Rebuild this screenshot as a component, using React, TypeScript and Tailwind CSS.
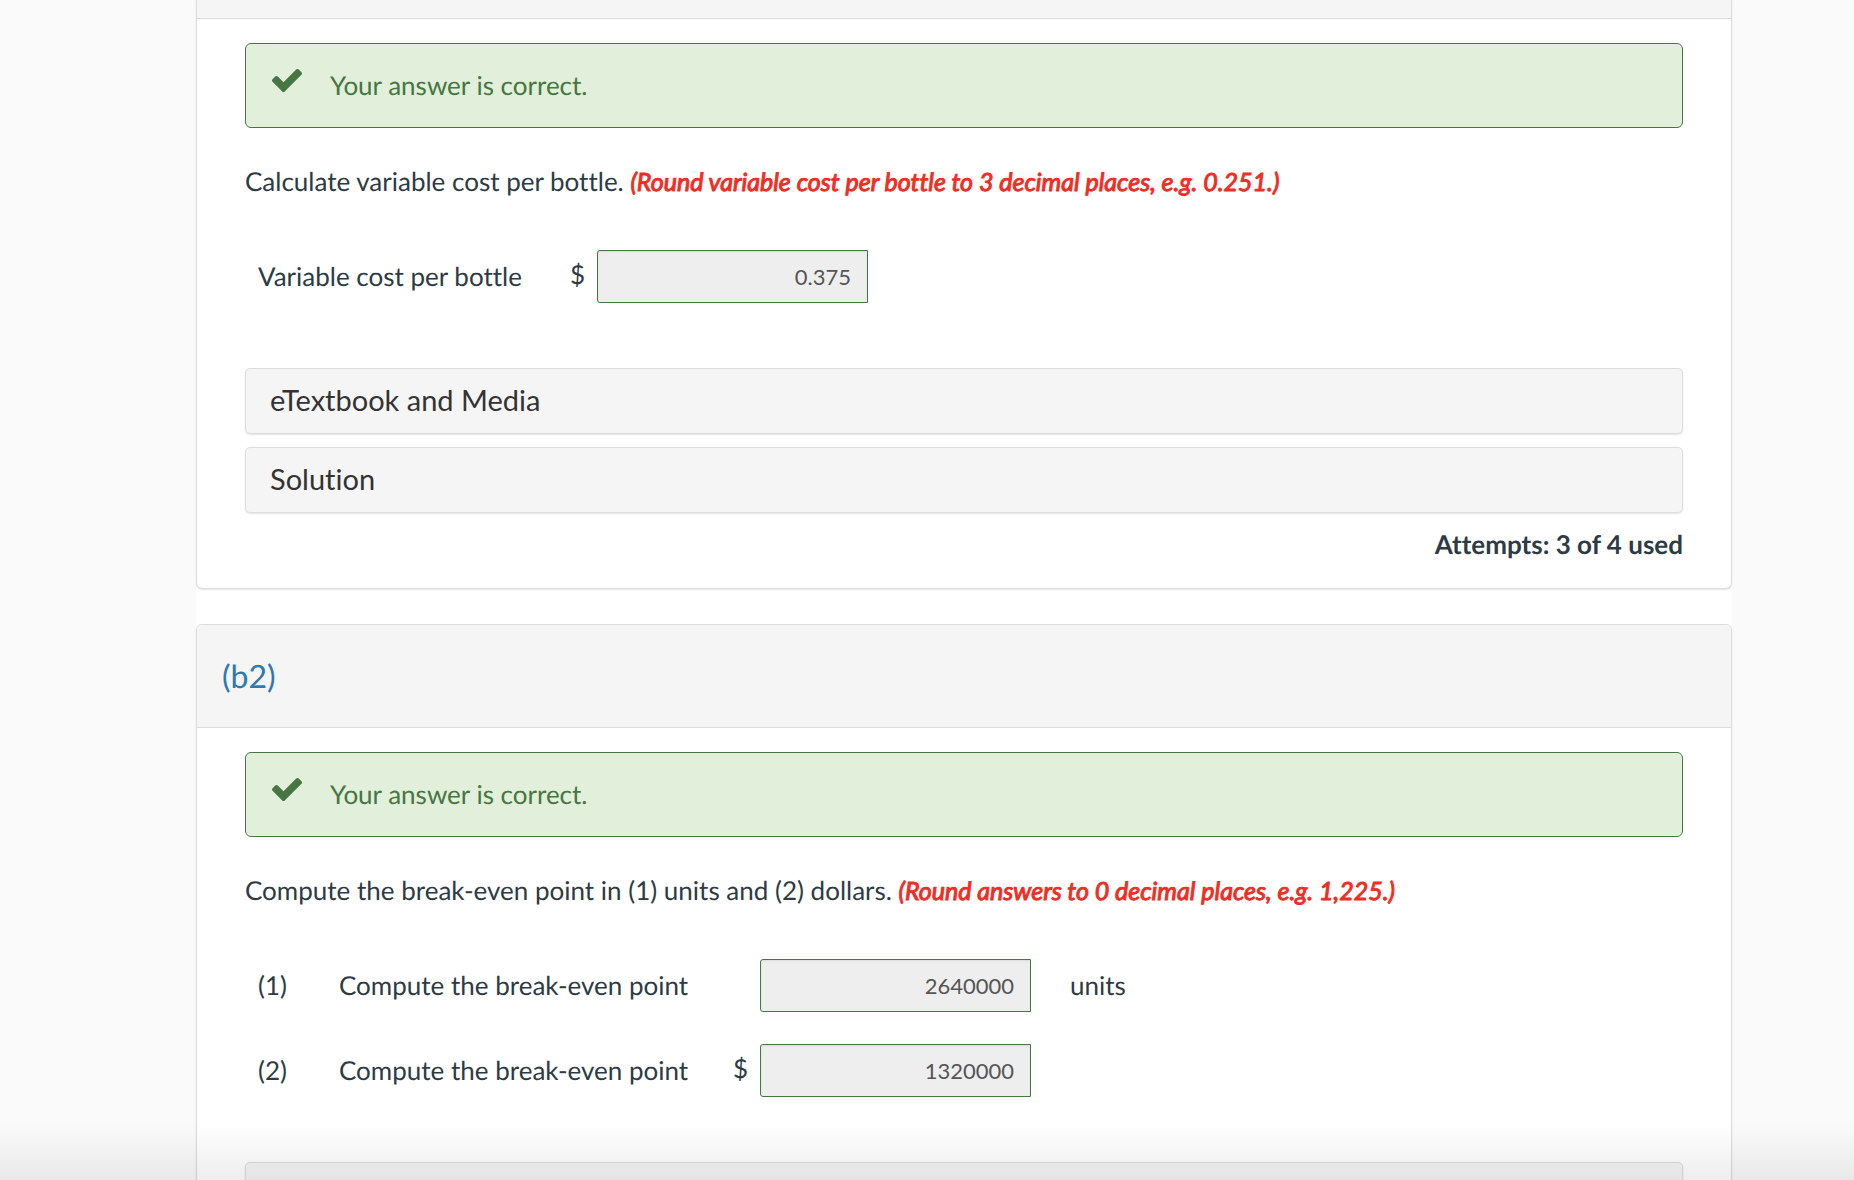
import type { ReactNode } from "react";

function CorrectAlert() {
  return (
    <div
      role="status"
      className="flex h-[85px] items-center rounded-[6px] border border-[#467742] bg-[#e2efda] pl-[26px] text-[#467742]"
    >
      <svg viewBox="0 0 1550 1188" className="mb-[10px] h-[23px] w-[30px] fill-current" aria-hidden="true">
        <path d="M1550 232q0 40-28 68l-724 724-136 136q-28 28-68 28t-68-28l-136-136L28 662Q0 634 0 594t28-68l136-136q28-28 68-28t68 28l294 295L1250 28q28-28 68-28t68 28l136 136q28 28 28 68z" />
      </svg>
      <span className="ml-7 pb-[2px]">Your answer is correct.</span>
    </div>
  );
}

function Panel({ title, children }: { title?: string; children: ReactNode }) {
  if (!title) {
    return (
      <section className="rounded-b-[6px] border border-t-0 border-[#dddddd] bg-white shadow-[0_1px_2px_rgba(0,0,0,0.1)]">
        <div className="h-[19px] border-b border-[#dddddd] bg-[#f5f5f5]" />
        <div className="px-12 pt-6">{children}</div>
      </section>
    );
  }

  return (
    <section className="rounded-[6px] border border-[#dddddd] bg-white shadow-[0_1px_2px_rgba(0,0,0,0.1)]">
      <header className="flex h-[103px] items-center rounded-t-[6px] border-b border-[#dddddd] bg-[#f5f5f5] px-[25px]">
        <h2 className="text-[32px] leading-[36px]">
          <a href="#b2" className="text-[#2d79b0]">
            {title}
          </a>
        </h2>
      </header>
      <div className="px-12 pt-6">{children}</div>
    </section>
  );
}

function Prompt({ text, note }: { text: string; note: string }) {
  return (
    <p className="mt-[35px]">
      {text} <em className="text-[25px] text-[#ee2e24] [-webkit-text-stroke:1px_#ee2e24]">{note}</em>
    </p>
  );
}

function Answer({ id, value, currency }: { id: string; value: string; currency?: boolean }) {
  return (
    <div className="flex items-center justify-end gap-3">
      {currency && <span className="pb-[6px]">$</span>}
      <input
        id={id}
        type="text"
        value={value}
        disabled
        className="h-[53px] w-[271px] rounded-l-[3px] border border-[#467742] bg-[#eeeeee] px-4 text-right text-[22px] text-[#555555] shadow-[inset_0_1px_2px_rgba(0,0,0,0.08)]"
      />
    </div>
  );
}

function Resource({ label, children }: { label?: string; children?: ReactNode }) {
  return (
    <button
      type="button"
      aria-label={label}
      className="block h-[66px] w-full rounded-[5px] border border-[#dddddd] bg-[#f5f5f5] px-6 pb-[2px] text-left text-[29px] text-[#333333] shadow-[0_1px_2px_rgba(0,0,0,0.1)]"
    >
      {children}
    </button>
  );
}

export default function App() {
  return (
    <div className="h-screen overflow-hidden bg-[#fafafa] pr-[122px] pl-[196px] font-['Lato',sans-serif] text-[26px] leading-[36px] text-[#2d3b45] [font-variant-ligatures:none] [text-rendering:geometricPrecision]">
      <main className="min-h-full bg-white">
        <Panel>
          <CorrectAlert />
          <Prompt
            text="Calculate variable cost per bottle."
            note="(Round variable cost per bottle to 3 decimal places, e.g. 0.251.)"
          />
          <div className="mt-[50px] grid grid-cols-[312px_298px] items-center pl-[13px]">
            <label htmlFor="variable-cost" className="pb-[2px]">
              Variable cost per bottle
            </label>
            <Answer id="variable-cost" value="0.375" currency />
          </div>
          <div className="mt-[65px] flex flex-col gap-[13px]">
            <Resource>eTextbook and Media</Resource>
            <Resource>Solution</Resource>
          </div>
          <p className="mt-[13px] mb-[26px] text-right font-bold">Attempts: 3 of 4 used</p>
        </Panel>

        <div className="h-[35px]" />

        <Panel title="(b2)">
          <CorrectAlert />
          <Prompt
            text="Compute the break-even point in (1) units and (2) dollars."
            note="(Round answers to 0 decimal places, e.g. 1,225.)"
          />
          <div className="mt-[50px] grid grid-cols-[81px_394px_298px_auto] items-center justify-start gap-y-8 pl-[13px]">
            <span className="pb-[2px]">(1)</span>
            <label htmlFor="units" className="pb-[2px]">
              Compute the break-even point
            </label>
            <Answer id="units" value="2640000" />
            <span className="pb-[2px] pl-[39px]">units</span>
            <span className="pb-[2px]">(2)</span>
            <label htmlFor="dollars" className="pb-[2px]">
              Compute the break-even point
            </label>
            <Answer id="dollars" value="1320000" currency />
          </div>
          <div className="mt-[65px]">
            <Resource label="eTextbook and Media" />
          </div>
        </Panel>
      </main>
      {/* fade along the bottom edge of the window */}
      <div className="pointer-events-none fixed inset-x-0 bottom-0 h-14 bg-linear-to-t from-black/7 to-transparent" />
    </div>
  );
}
